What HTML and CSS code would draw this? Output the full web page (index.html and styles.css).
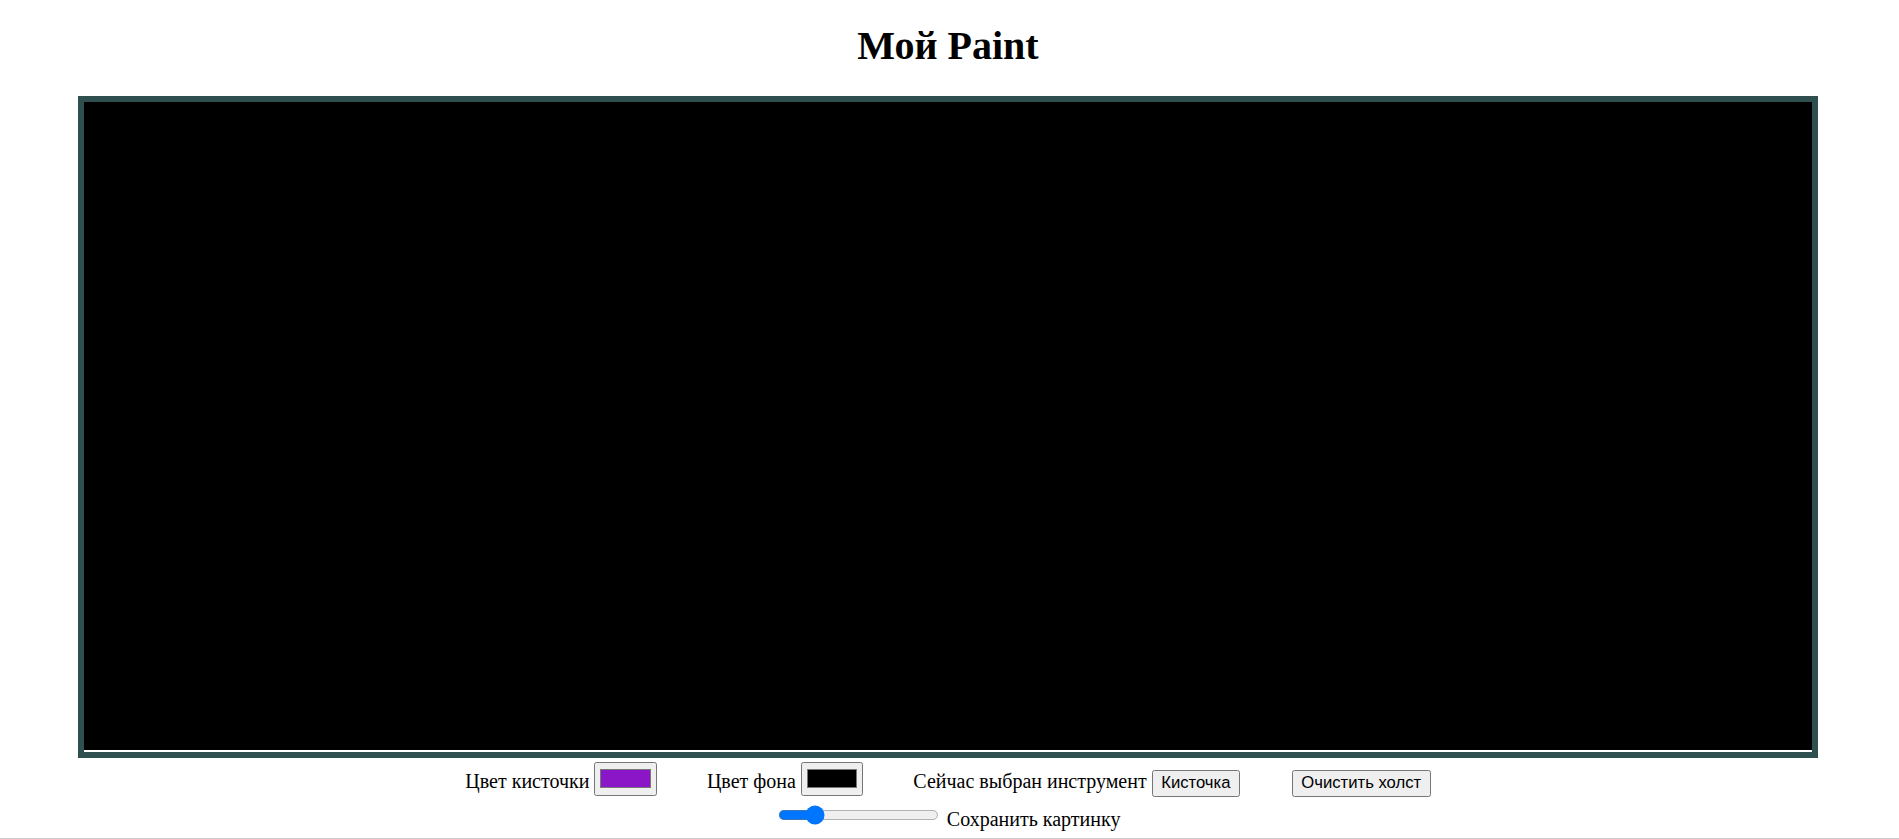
FILE: index.html
```html
<!DOCTYPE html>
<html lang="ru">
<head>
<meta charset="utf-8">
<title>Мой Paint</title>
<link rel="stylesheet" href="styles.css">
</head>
<body>
<div class="page">
  <h1 class="title">Мой Paint</h1>
  <div class="board"><canvas class="canvas" width="1728" height="648"></canvas></div>
  <div class="controls">
    <div class="row"><label class="grp">Цвет кисточки <input class="color" type="color" value="#8b16c8"></label><label class="grp gap">Цвет фона <input class="color" type="color" value="#000000"></label><span class="grp gap">Сейчас выбран инструмент <button class="btn">Кисточка</button></span><button class="btn gap-btn">Очистить холст</button></div>
    <div class="row row-second"><input class="range" type="range" min="1" max="100" value="20"> <span class="save">Сохранить картинку</span></div>
  </div>
</div>
<div class="bottom-line"></div>
</body>
</html>
```

FILE: styles.css
```css
html, body {
  margin: 0;
  padding: 0;
  background: #ffffff;
}

body {
  font-family: "Liberation Serif", "Times New Roman", serif;
  color: #000000;
  overflow: hidden;
}

.page {
  width: 1896px;
}

.title {
  margin: 23px 0 27px;
  font-size: 40px;
  line-height: 46px;
  font-weight: bold;
  text-align: center;
}

.board {
  width: 1728px;
  margin: 0 auto;
  border: 6px solid #2f4f4f;
  background: #ffffff;
  padding-bottom: 2px;
}

.canvas {
  display: block;
  width: 1728px;
  height: 648px;
  background: #000000;
}

.controls {
  zoom: 1.25;
  font-size: 16px;
  text-align: center;
  padding-top: 3px;
}

.row {
  line-height: 20px;
}

.row-second {
  margin-top: 5px;
}

.gap {
  margin-left: 40px;
}

.gap-btn {
  margin-left: 41.5px;
}

.btn {
  font-family: "Liberation Sans", Arial, sans-serif;
  font-size: 13.333px;
}

.bottom-line {
  position: fixed;
  left: 0;
  right: 0;
  bottom: 0;
  height: 1px;
  background: #cdcdcd;
}
```
